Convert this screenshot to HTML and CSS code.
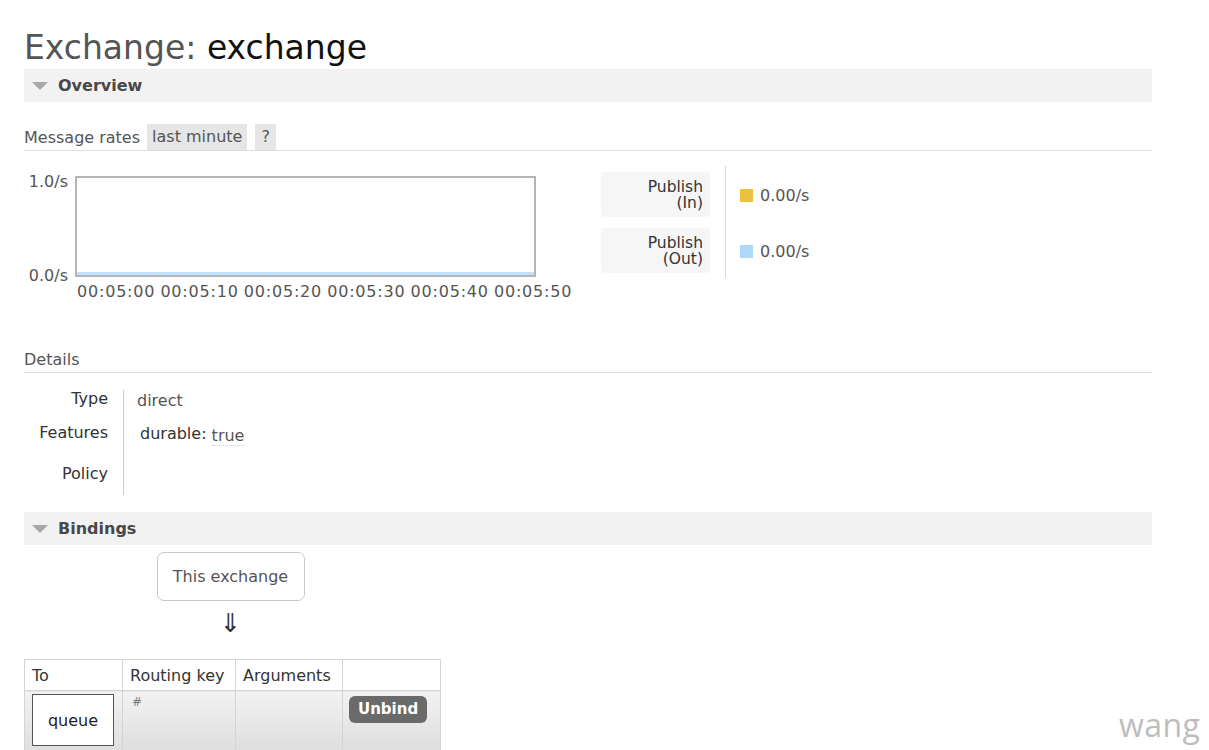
FILE: index.html
```html
<!DOCTYPE html>
<html>
<head>
<meta charset="utf-8">
<link rel="stylesheet" href="styles.css">
</head>
<body>
<div class="page">
  <h1 class="title"><span class="title-kind">Exchange:</span> <b class="title-name">exchange</b></h1>

  <div class="section-bar"><span class="tri"></span><span class="section-name">Overview</span></div>

  <div class="sub-head">
    <span class="sub-label">Message rates</span>
    <span class="chip">last minute</span>
    <span class="chip chip-q">?</span>
  </div>

  <div class="rates">
    <div class="chart">
      <div class="ylabels"><span>1.0/s</span><span>0.0/s</span></div>
      <div class="plot-wrap">
        <div class="plot"><div class="plot-line"></div></div>
        <div class="xlabels">
          <span>00:05:00</span><span>00:05:10</span><span>00:05:20</span><span>00:05:30</span><span>00:05:40</span><span>00:05:50</span>
        </div>
      </div>
    </div>
    <div class="legend">
      <div class="legend-names">
        <div class="legend-name">Publish<br>(In)</div>
        <div class="legend-name">Publish<br>(Out)</div>
      </div>
      <div class="legend-values">
        <div class="legend-value"><span class="swatch sw-yellow"></span>0.00/s</div>
        <div class="legend-value"><span class="swatch sw-blue"></span>0.00/s</div>
      </div>
    </div>
  </div>

  <div class="sub-head sub-details"><span class="sub-label">Details</span></div>

  <div class="details">
    <div class="det-labels">
      <div class="det-l det-type">Type</div>
      <div class="det-l det-feat">Features</div>
      <div class="det-l det-pol">Policy</div>
    </div>
    <div class="det-values">
      <div class="det-v det-type">direct</div>
      <div class="det-v det-feat"><span class="feat-key">durable:</span> <span class="feat-val">true</span></div>
      <div class="det-v det-pol"></div>
    </div>
  </div>

  <div class="section-bar"><span class="tri"></span><span class="section-name">Bindings</span></div>

  <div class="bind-flow">
    <div class="this-ex">This exchange</div>
    <div class="arrow">⇓</div>
  </div>

  <table class="bindings">
    <tr class="bh">
      <th class="c1">To</th><th class="c2">Routing key</th><th class="c3">Arguments</th><th class="c4"></th>
    </tr>
    <tr class="br">
      <td class="c1"><span class="queue">queue</span></td>
      <td class="c2"><span class="hash">#</span></td>
      <td class="c3"></td>
      <td class="c4"><span class="unbind">Unbind</span></td>
    </tr>
  </table>
</div>
<div class="watermark">wang</div>
</body>
</html>
```

FILE: styles.css
```css
html, body {
  margin: 0;
  padding: 0;
  background: #fff;
}
body {
  font-family: "DejaVu Sans", Verdana, sans-serif;
  font-size: 16px;
  color: #484848;
  width: 1209px;
  height: 750px;
  overflow: hidden;
  position: relative;
}
.page {
  padding: 0 57px 0 24px;
}
.title {
  margin: 0;
  padding-top: 27px;
  height: 41px;
  font-size: 33px;
  font-weight: normal;
  line-height: 41px;
}
.title-kind { color: #555; }
.title-name { color: #111; font-weight: normal; }

.section-bar {
  height: 33px;
  background: #f2f2f2;
  display: flex;
  align-items: center;
  padding-left: 8px;
  margin-top: 1px;
}
.tri {
  width: 0;
  height: 0;
  border-left: 8px solid transparent;
  border-right: 8px solid transparent;
  border-top: 8px solid #a8a8a8;
  margin-right: 10px;
  margin-top: 1px;
}
.section-name {
  font-weight: bold;
  font-size: 16px;
  color: #484848;
}

.sub-head {
  margin-top: 22px;
  height: 26px;
  border-bottom: 1px solid #ddd;
  display: flex;
  align-items: center;
  gap: 7px;
  font-size: 16px;
  color: #555;
}
.chip {
  background: #e6e6e6;
  height: 26px;
  line-height: 26px;
  padding: 0 5px;
  color: #555;
}
.chip-q { padding: 0 6px; margin-left: 1px; }

.rates {
  display: flex;
  margin-top: 15px;
  align-items: flex-start;
}
.chart {
  display: flex;
  width: 577px;
  flex: none;
}
.ylabels {
  width: 51px;
  height: 120px;
  display: flex;
  flex-direction: column;
  justify-content: space-between;
  align-items: flex-end;
  padding-right: 7px;
  padding-top: 8px;
  padding-bottom: 2px;
  box-sizing: border-box;
  color: #555;
  font-size: 16px;
  flex: none;
}
.ylabels span { line-height: 16px; }
.plot-wrap {
  display: flex;
  flex-direction: column;
  margin-top: 10px;
}
.plot {
  width: 461px;
  height: 101px;
  flex: none;
  border: 2px solid #b5b5b5;
  box-sizing: border-box;
  position: relative;
  background: #fff;
}
.plot-line {
  position: absolute;
  left: 0;
  right: 0;
  bottom: 0;
  height: 3px;
  background: #c4e2f9;
}
.xlabels {
  display: flex;
  margin-left: 2px;
  margin-top: 5px;
  font-size: 16px;
  line-height: 19px;
  color: #555;
  letter-spacing: 0.8px;
}
.xlabels span {
  width: 83.4px;
  text-align: left;
  flex: none;
}

.legend {
  display: flex;
}
.legend-names {
  display: flex;
  flex-direction: column;
  gap: 11px;
  padding-top: 6px;
  padding-bottom: 5px;
  padding-right: 15px;
  border-right: 1px solid #d8d8d8;
}
.legend-name {
  width: 109px;
  height: 45px;
  background: #f6f6f6;
  border-radius: 4px;
  box-sizing: border-box;
  text-align: right;
  padding: 7px 7px 0 0;
  line-height: 16px;
  font-size: 15.5px;
  color: #333;
}
.legend-values {
  display: flex;
  flex-direction: column;
  padding-left: 14px;
  padding-top: 21px;
  gap: 40px;
}
.legend-value {
  display: flex;
  align-items: center;
  height: 16px;
  color: #555;
  font-size: 16px;
}
.swatch {
  width: 13px;
  height: 13px;
  margin-right: 7px;
}
.sw-yellow { background: #ecc13e; }
.sw-blue { background: #afd8f8; }

.sub-details {
  margin-top: 46px;
  height: 25px;
  gap: 0;
}

.details {
  display: flex;
  margin-top: 17px;
  height: 105px;
}
.det-labels {
  width: 84px;
  border-right: 1px solid #ccc;
  padding-right: 15px;
  text-align: right;
  color: #333;
}
.det-values {
  padding-left: 13px;
}
.det-l, .det-v {
  height: 18px;
  line-height: 18px;
}
.det-feat { margin-top: 16px; }
.det-pol { margin-top: 23px; }
.det-v.det-type { margin-top: 2px; color: #555; }
.det-v.det-feat { margin-top: 15px; padding-left: 3px; color: #333; }
.feat-val {
  color: #555;
  position: relative;
  top: 2px;
  border-bottom: 1px dotted #ccc;
}

.details + .section-bar { margin-top: 17px; }

.bind-flow {
  width: 416px;
  display: flex;
  flex-direction: column;
  align-items: center;
  padding-top: 7px;
}
.this-ex {
  width: 148px;
  height: 49px;
  box-sizing: border-box;
  border: 1px solid #c8c8c8;
  border-radius: 7px;
  display: flex;
  align-items: center;
  justify-content: center;
  color: #555;
  margin-left: -3px;
}
.arrow {
  margin-top: 8px;
  font-size: 26px;
  line-height: 28px;
  color: #333;
  margin-left: -3px;
}

.bindings {
  margin-top: 22px;
  border-collapse: collapse;
  font-size: 16px;
}
.bindings th, .bindings td {
  border: 1px solid #d4d4d4;
  padding: 0;
  vertical-align: top;
  text-align: left;
}
.bh th {
  height: 30px;
  font-weight: normal;
  color: #333;
  padding: 0 7px;
  vertical-align: middle;
}
.bh .c1 { width: 83px; }
.bh .c2 { width: 98px; }
.bh .c3 { width: 92px; }
.bh .c4 { width: 83px; }
.br td {
  height: 60px;
  background: linear-gradient(#f2f2f2, #dedede);
}
.queue {
  display: flex;
  align-items: center;
  justify-content: center;
  width: 82px;
  height: 52px;
  box-sizing: border-box;
  margin: 3px 0 0 7px;
  background: #fff;
  border: 1px solid #555;
  color: #222;
}
.hash {
  display: block;
  font-size: 12px;
  color: #777;
  padding: 4px 0 0 9px;
}
.unbind {
  display: inline-block;
  margin: 5px 0 0 6px;
  background: #6a6a6a;
  color: #fff;
  font-weight: bold;
  font-size: 15px;
  border-radius: 6px;
  padding: 0 9px;
  height: 27px;
  line-height: 27px;
}
.watermark {
  position: absolute;
  left: 1119px;
  top: 703px;
  font-family: "Open Sans", sans-serif;
  font-size: 32px;
  color: #bdbdbd;
  letter-spacing: 0.4px;
}
```
